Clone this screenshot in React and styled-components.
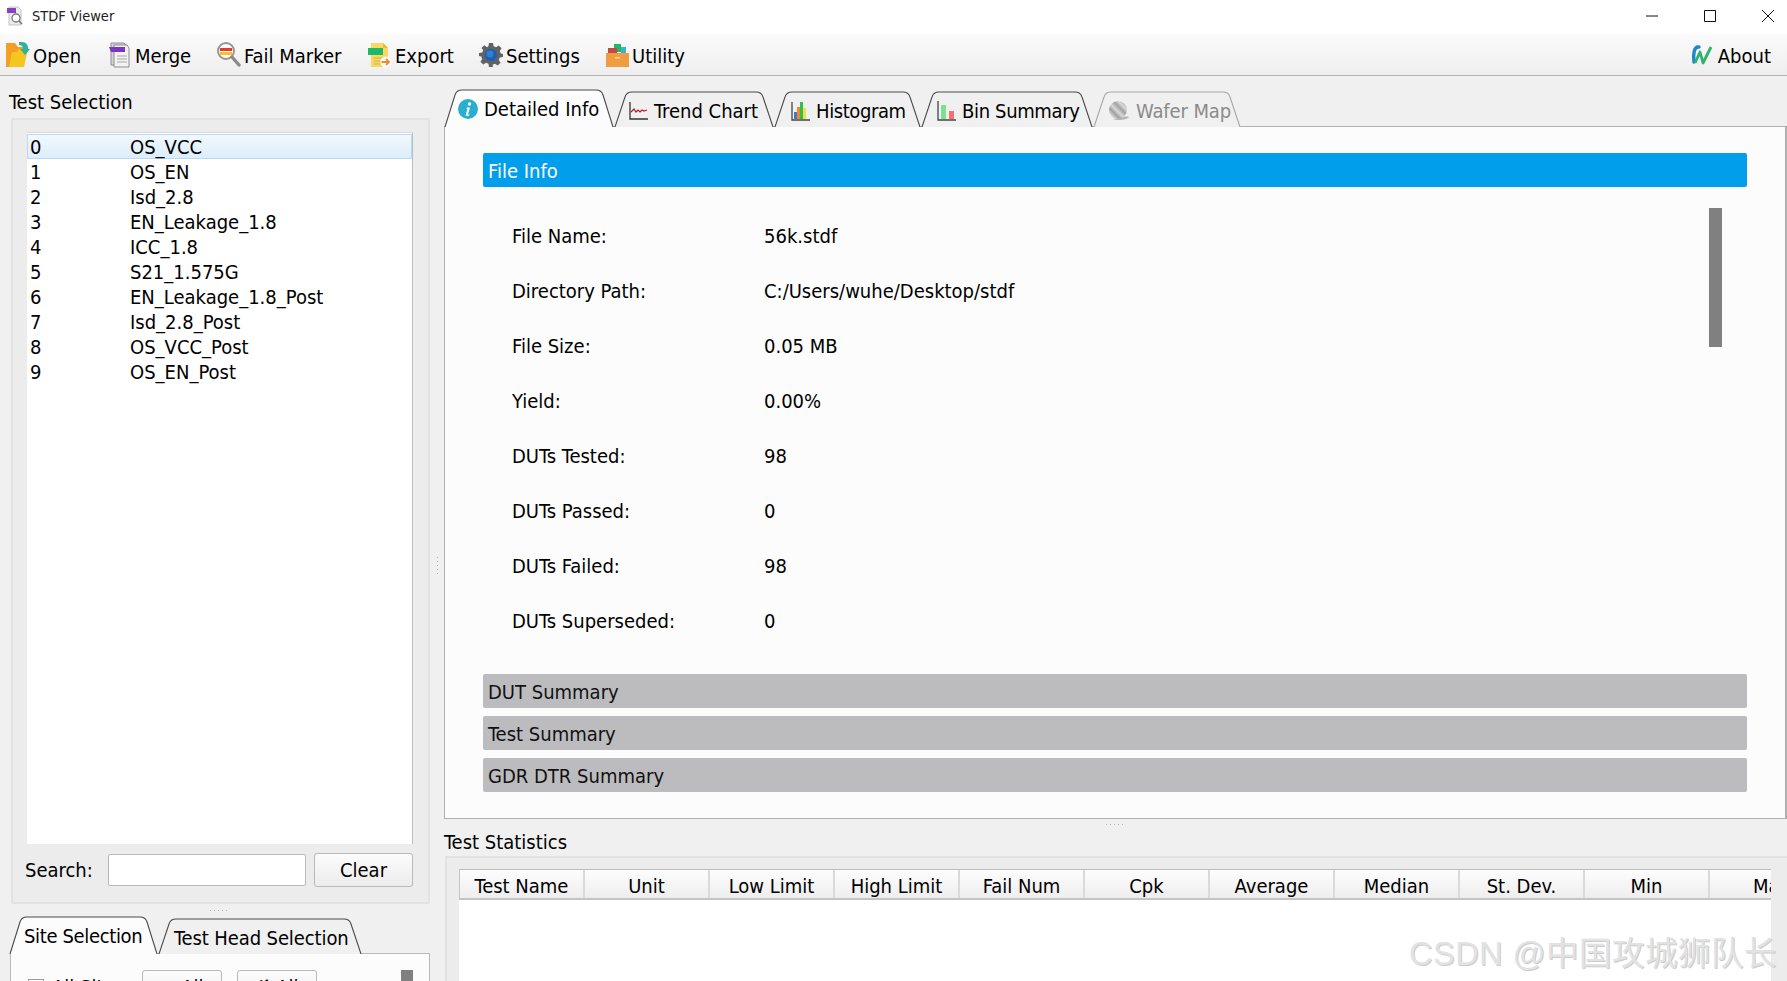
import React from 'react';
import styled, { createGlobalStyle } from 'styled-components';

const GlobalStyle = createGlobalStyle`
  html, body { margin: 0; padding: 0; background: #f0f0f0; overflow: hidden; }
  * { box-sizing: border-box; }
`;

const FONT = `"DejaVu Sans", "Noto Sans", sans-serif`;

const Window = styled.div`
  position: relative;
  width: 1787px;
  height: 981px;
  overflow: hidden;
  display: flex;
  flex-direction: column;
  background: #f0f0f0;
  color: #000;
  font-family: ${FONT};
  font-stretch: condensed;
  font-size: 20px;
`;

const TitleBar = styled.div`
  height: 34px;
  flex: none;
  background: #fff;
  display: flex;
  align-items: center;
  padding-left: 6px;
  padding-bottom: 3px;
  font-size: 14.5px;
  color: #222;
  gap: 8px;
`;

const WindowControls = styled.div`
  margin-left: auto;
  display: flex;
  padding-right: 13px;
  gap: 46px;
  svg { display: block; }
`;

const Toolbar = styled.div`
  height: 42px;
  flex: none;
  background: linear-gradient(#fbfbfb, #eeeeee);
  border-bottom: 1px solid #b4b4b4;
  display: flex;
  align-items: center;
  padding-left: 6px;
  padding-right: 16px;
`;

const ToolButton = styled.div`
  width: ${p => p.$w}px;
  display: flex;
  align-items: center;
  gap: 3px;
  white-space: nowrap;
  margin-left: ${p => (p.$end ? 'auto' : '0')};
  svg { flex: none; }
  span { padding-top: 2px; }
`;

const Main = styled.div`
  flex: 1;
  display: flex;
  min-height: 0;
`;

const LeftColumn = styled.div`
  width: 430px;
  flex: none;
  padding-left: 9px;
  display: flex;
  flex-direction: column;
`;

const SectionLabel = styled.div`
  height: ${p => p.$h}px;
  flex: none;
  display: flex;
  align-items: center;
  padding-top: ${p => p.$pt || 0}px;
  padding-bottom: ${p => p.$pb || 0}px;
`;

const SelectionGroup = styled.div`
  margin-left: 2px;
  height: 786px;
  flex: none;
  background: #ececec;
  border: 2px solid #e2e2e2;
  border-radius: 2px;
  padding: 12px 15px 0 14px;
  display: flex;
  flex-direction: column;
`;

const TestList = styled.div`
  height: 712px;
  flex: none;
  background: #fff;
  border-right: 1px solid #bdbdbd;
  border-top: 1px solid #d8d8d8;
  padding-top: 1px;
`;

const TestRow = styled.div`
  height: 25px;
  display: flex;
  align-items: center;
  padding-left: 2px;
  border: 1px solid ${p => (p.$selected ? '#b9daf5' : 'transparent')};
  background: ${p => (p.$selected ? 'linear-gradient(#f2f8fd, #dcedfb)' : 'transparent')};
`;

const RowIndex = styled.span`
  width: 100px;
`;

const SearchRow = styled.div`
  display: flex;
  align-items: center;
  margin-top: 9px;
  height: 34px;
`;

const SearchLabel = styled.span`
  width: 83px;
  margin-left: -2px;
`;

const SearchInput = styled.div`
  width: 199px;
  height: 32px;
  background: #fff;
  border: 1px solid #b9b9b9;
  border-radius: 2px;
`;

const PushButton = styled.div`
  width: ${p => p.$w}px;
  height: 34px;
  flex: none;
  margin-left: ${p => p.$ml || 0}px;
  border: 1px solid #b9b9b9;
  border-radius: 3px;
  background: linear-gradient(#fcfcfc, #ececec);
  display: flex;
  align-items: center;
  justify-content: center;
`;

const SplitDots = styled.div`
  height: ${p => p.$h}px;
  flex: none;
  display: flex;
  align-items: center;
  justify-content: center;
  &::before {
    content: '';
    width: 20px;
    height: 1px;
    background: repeating-linear-gradient(90deg, #b4b4b4 0 1px, transparent 1px 4px);
  }
`;

const TabBar = styled.div`
  height: ${p => p.$h}px;
  flex: none;
  display: flex;
  align-items: flex-end;
  position: relative;
  z-index: 1;
  margin-bottom: -1px;
`;

const TabRoot = styled.div`
  position: relative;
  width: ${p => p.$w}px;
  height: ${p => p.$h}px;
  flex: none;
  display: flex;
  align-items: center;
  gap: 6px;
  padding-left: ${p => p.$pad}px;
  padding-top: ${p => (p.$active ? 1 : 3)}px;
  white-space: nowrap;
  letter-spacing: ${p => p.$tight || 0}px;
  color: ${p => (p.$disabled ? '#8a8a8a' : '#000')};
  > * { position: relative; }
`;

const TabOutline = styled.svg`
  position: absolute !important;
  left: 0;
  top: 0;
`;

const SitePane = styled.div`
  flex: 1;
  margin-left: 1px;
  background: #fcfcfc;
  border: 1px solid #b9b9b9;
  padding: 16px 16px 0 17px;
  display: flex;
  align-items: flex-start;
`;

const CheckLabel = styled.label`
  display: flex;
  align-items: center;
  gap: 8px;
  width: 114px;
  height: 34px;
  white-space: nowrap;
`;

const CheckBox = styled.span`
  width: 16px;
  height: 16px;
  flex: none;
  background: #fff;
  border: 1px solid #9a9a9a;
`;

const ScrollThumb = styled.div`
  width: ${p => p.$w}px;
  height: ${p => p.$h}px;
  flex: none;
  margin-left: auto;
  background: #808080;
`;

const VSplit = styled.div`
  width: 14px;
  flex: none;
  display: flex;
  align-items: center;
  justify-content: center;
  &::before {
    content: '';
    width: 1px;
    height: 20px;
    margin-top: 76px;
    background: repeating-linear-gradient(#b4b4b4 0 1px, transparent 1px 4px);
  }
`;

const RightColumn = styled.div`
  flex: 1;
  min-width: 0;
  padding-top: 13px;
  display: flex;
  flex-direction: column;
`;

const InfoPane = styled.div`
  height: 693px;
  flex: none;
  background: #fcfcfc;
  border: 1px solid #b0b0b0;
  border-right-width: 2px;
  padding: 26px 38px 0 38px;
`;

const SectionBar = styled.div`
  height: 34px;
  margin-bottom: ${p => p.$mb || 0}px;
  border-radius: 2px;
  background: ${p => (p.$active ? '#009eeb' : '#bcbcbf')};
  color: ${p => (p.$active ? '#fff' : '#111')};
  display: flex;
  align-items: center;
  padding: 2px 0 0 5px;
`;

const InfoScroll = styled.div`
  margin-top: 21px;
  height: 466px;
  display: flex;
  align-items: flex-start;
  padding-right: 25px;
`;

const InfoList = styled.div`
  flex: 1;
`;

const InfoRow = styled.div`
  height: 55px;
  display: flex;
  align-items: center;
  padding-left: 29px;
`;

const InfoKey = styled.span`
  width: 252px;
`;

const StatsGroup = styled.div`
  flex: none;
  margin-left: 1px;
  height: 140px;
  background: #ececec;
  border: 2px solid #e2e2e2;
  border-right: 0;
  padding: 11px 16px 0 12px;
`;

const StatsTable = styled.div`
  height: 200px;
  background: #fff;
  overflow: hidden;
`;

const HeaderRow = styled.div`
  display: flex;
  height: 31px;
  border-top: 1px solid #bdbdbd;
  border-bottom: 2px solid #c4c4c4;
  background: linear-gradient(#fdfdfd, #eeeeee);
  border-left: 1px solid #c4c4c4;
`;

const HeaderCell = styled.div`
  width: 125px;
  flex: none;
  border-right: 2px solid #dadada;
  display: flex;
  align-items: center;
  justify-content: center;
  padding-top: 3px;
  white-space: nowrap;
`;

const Watermark = styled.div`
  position: absolute;
  left: 1409px;
  top: 927px;
  font-family: "Liberation Sans", "Noto Sans CJK SC", sans-serif;
  font-size: 32.5px;
  font-stretch: normal;
  white-space: nowrap;
  color: #e2e2e2;
  text-shadow: 1px 1px 0 #cccccc;
  letter-spacing: 0.5px;
`;

/* ---- icons ---- */

const IconOpen = () => (
  <svg width="24" height="26" viewBox="0 0 24 26">
    <path d="M0 1h9l3 4h5v20H0z" fill="#f29f24" />
    <path d="M3 25l3-15h5l2-3h9l-4 18z" fill="#f5c61f" />
    <path d="M13 0h3c4 0 6 3 6 6v1h2l-5 6-5-6h3V6c0-2-2-3-4-3z" fill="#2cb39c" />
  </svg>
);

const IconMerge = () => (
  <svg width="24" height="26" viewBox="0 0 24 26">
    <path d="M3 1h13l2 2v20H3z" fill="#d4d4d4" stroke="#8d8d8d" />
    <path d="M6 3h13l2 3v19H6z" fill="#f2f2f2" stroke="#8d8d8d" />
    <path d="M1 5h16v5H3z" fill="#7d35c4" />
    <path d="M9 14h10M9 17h10M9 20h10" stroke="#a9a9a9" />
  </svg>
);

const IconFail = () => (
  <svg width="25" height="26" viewBox="0 0 25 26">
    <circle cx="10" cy="9" r="8" fill="#fafafa" stroke="#9a9590" strokeWidth="2" />
    <path d="M4 6h12v3H4z" fill="#e43b2c" />
    <path d="M4 10h12v3H4z" fill="#f4c32c" />
    <path d="M16 15l7 8" stroke="#8a8a8a" strokeWidth="3.4" strokeLinecap="round" />
  </svg>
);

const IconExport = () => (
  <svg width="24" height="26" viewBox="0 0 24 26">
    <path d="M3 1h12l5 5v19H3z" fill="#f8d864" />
    <path d="M15 1l5 5h-5z" fill="#eebb2c" />
    <path d="M0 6h15v7H0z" fill="#1fb866" />
    <path d="M6 16h8M6 19h6M6 22h6" stroke="#d6ae3e" />
    <circle cx="18" cy="20" r="5.5" fill="#fff" />
    <path d="M13.5 20h7M18 17l3 3-3 3" stroke="#ef8a34" strokeWidth="1.8" fill="none" />
  </svg>
);

const IconGear = () => (
  <svg width="24" height="26" viewBox="0 0 24 24">
    <path
      d="M10 0h4l.6 3.2 2.4 1 2.700-1.800 2.900 2.900-1.800 2.700 1 2.400L24 11v3l-3.200.6-1 2.400 1.800 2.700-2.900 2.900-2.700-1.800-2.400 1L14 24h-4l-.6-3.200-2.400-1-2.700 1.800-2.900-2.900L3.200 16l-1-2.400L0 13v-3l3.200-.6 1-2.400L2.400 5.100l2.900-2.900L8 4.200l1.400-1z"
      fill="#5f6368"
    />
    <circle cx="12" cy="12" r="6" fill="#1d5fae" />
    <circle cx="11" cy="11" r="3.500" fill="#2f7fd6" />
  </svg>
);

const IconUtility = () => (
  <svg width="23" height="24" viewBox="0 0 23 24">
    <path d="M8 1h7v8H8z" fill="#25b565" />
    <path d="M15 4h5v6h-5z" fill="#36b6c9" />
    <path d="M2 5h9v6H2z" fill="#bd4b48" />
    <path d="M0 10h23v14H0z" fill="#f09c41" />
    <path d="M9 14h5v1.500H9z" fill="#f6d7af" />
  </svg>
);

const IconAbout = () => (
  <svg width="25" height="22" viewBox="0 0 25 22">
    <path d="M9 3C4 2 3 10 4 18" stroke="#1e86d0" strokeWidth="3.400" fill="none" strokeLinecap="round" />
    <path d="M5 19L10 8l3 11 8-16" stroke="#2fb26a" strokeWidth="2.800" fill="none" strokeLinejoin="round" />
  </svg>
);

const IconInfo = () => (
  <svg width="20" height="20" viewBox="0 0 20 20">
    <circle cx="10" cy="10" r="10" fill="#29aed1" />
    <circle cx="11.500" cy="5" r="1.700" fill="#fff" />
    <path d="M9 8.500h3l-2 7h1.500l-.5 1.200H7.500l2-7H8.300z" fill="#fff" />
  </svg>
);

const IconTrend = () => (
  <svg width="19" height="18" viewBox="0 0 19 18">
    <path d="M1 0v17h18" stroke="#333" strokeWidth="1.300" fill="none" />
    <path d="M2 10l3-3 2 3 2-2 2 2 2-2 2 1 3-1" stroke="#a8202a" strokeWidth="1.200" fill="none" />
  </svg>
);

const IconHist = () => (
  <svg width="19" height="20" viewBox="0 0 19 20">
    <path d="M1 1v18h18" stroke="#444" strokeWidth="1.300" fill="none" />
    <path d="M3 11h3v7H3z" fill="#3f78d6" />
    <path d="M6 6h3v12H6z" fill="#f0862f" />
    <path d="M9 1h3v17H9z" fill="#30c04c" />
    <path d="M12 7h3v11h-3z" fill="#f0e04a" />
  </svg>
);

const IconBin = () => (
  <svg width="19" height="20" viewBox="0 0 19 20">
    <path d="M1 0v19h18" stroke="#444" strokeWidth="1.300" fill="none" />
    <path d="M4 4h5v14H4z" fill="#7ee08e" />
    <path d="M12 10h5v8h-5z" fill="#f6706e" />
  </svg>
);

const IconWafer = () => (
  <svg width="22" height="22" viewBox="0 0 22 22">
    <defs>
      <linearGradient id="waferFill" x1="0" y1="1" x2="0.3" y2="0.7" spreadMethod="repeat">
        <stop offset="0" stopColor="#9c9c9c" />
        <stop offset="0.5" stopColor="#d8d8d8" />
        <stop offset="1" stopColor="#a8a8a8" />
      </linearGradient>
    </defs>
    <circle cx="10" cy="10" r="9" fill="url(#waferFill)" />
    <path d="M5 19c5 2 14 1 16-2-3-1-6 0-8 1z" fill="#b4b4b4" />
  </svg>
);

const AppIcon = () => (
  <svg width="18" height="20" viewBox="0 0 18 20">
    <path d="M3 1h9l3 3v15H3z" fill="#ececec" stroke="#c4c4c4" />
    <path d="M1 2h9v5H1z" fill="#8a3fc9" />
    <circle cx="10" cy="12" r="4" fill="#fff" stroke="#777" strokeWidth="1.300" />
    <path d="M13 15l3 3" stroke="#777" strokeWidth="1.600" />
  </svg>
);

const Tab = ({ w, h, pad, active, disabled, tight, icon, label }) => {
  const stroke = disabled ? '#a8a8a8' : '#4a4a4a';
  const fill = active ? '#fcfcfc' : '#f0f0f0';
  const top = 1;
  const outline = `M1 ${h}L11 ${top + 5}Q12.500 ${top} 18 ${top}H${w - 18}Q${w - 12.500} ${top} ${w - 11} ${top + 5}L${w - 1} ${h}`;
  return (
    <TabRoot $w={w} $h={h} $pad={pad} $active={active} $disabled={disabled} $tight={tight}>
      <TabOutline width={w} height={h} viewBox={`0 0 ${w} ${h}`}>
        <path d={outline} fill={fill} stroke={stroke} strokeWidth="1.100" />
      </TabOutline>
      {icon}
      <span>{label}</span>
    </TabRoot>
  );
};

const tests = ['OS_VCC', 'OS_EN', 'Isd_2.8', 'EN_Leakage_1.8', 'ICC_1.8', 'S21_1.575G', 'EN_Leakage_1.8_Post', 'Isd_2.8_Post', 'OS_VCC_Post', 'OS_EN_Post'];

const fileInfo = [
  ['File Name:', '56k.stdf'],
  ['Directory Path:', 'C:/Users/wuhe/Desktop/stdf'],
  ['File Size:', '0.05 MB'],
  ['Yield:', '0.00%'],
  ['DUTs Tested:', '98'],
  ['DUTs Passed:', '0'],
  ['DUTs Failed:', '98'],
  ['DUTs Superseded:', '0'],
];

const columns = ['Test Name', 'Unit', 'Low Limit', 'High Limit', 'Fail Num', 'Cpk', 'Average', 'Median', 'St. Dev.', 'Min', 'Max'];

const tools = [
  { name: 'Open', w: 102, Icon: IconOpen },
  { name: 'Merge', w: 108, Icon: IconMerge },
  { name: 'Fail Marker', w: 152, Icon: IconFail },
  { name: 'Export', w: 111, Icon: IconExport },
  { name: 'Settings', w: 127, Icon: IconGear },
  { name: 'Utility', w: 90, Icon: IconUtility },
];

export default function App() {
  return (
    <Window>
      <GlobalStyle />
      <TitleBar>
        <AppIcon />
        STDF Viewer
        <WindowControls>
          <svg width="12" height="12" viewBox="0 0 12 12"><path d="M0 6h12" stroke="#111" /></svg>
          <svg width="12" height="12" viewBox="0 0 12 12"><path d="M.5.5h11v11H.5z" stroke="#111" fill="none" /></svg>
          <svg width="12" height="12" viewBox="0 0 12 12"><path d="M0 0l12 12M12 0L0 12" stroke="#111" /></svg>
        </WindowControls>
      </TitleBar>

      <Toolbar>
        {tools.map(({ name, w, Icon }) => (
          <ToolButton key={name} $w={w}>
            <Icon />
            <span>{name}</span>
          </ToolButton>
        ))}
        <ToolButton $end>
          <IconAbout />
          <span>About</span>
        </ToolButton>
      </Toolbar>

      <Main>
        <LeftColumn>
          <SectionLabel $h={42} $pt={10}>Test Selection</SectionLabel>
          <SelectionGroup>
            <TestList>
              {tests.map((name, i) => (
                <TestRow key={name} $selected={i === 0}>
                  <RowIndex>{i}</RowIndex>
                  {name}
                </TestRow>
              ))}
            </TestList>
            <SearchRow>
              <SearchLabel>Search:</SearchLabel>
              <SearchInput />
              <PushButton $w={99} $ml={8}>Clear</PushButton>
            </SearchRow>
          </SelectionGroup>
          <SplitDots $h={12} />
          <TabBar $h={38}>
            <Tab w={149} h={38} pad={15} active tight={-0.35} label="Site Selection" />
            <Tab w={204} h={36} pad={16} tight={-0.1} label="Test Head Selection" />
          </TabBar>
          <SitePane>
            <CheckLabel><CheckBox />All Sites</CheckLabel>
            <PushButton $w={80}>✓ All</PushButton>
            <PushButton $w={80} $ml={15}>✗ All</PushButton>
            <ScrollThumb $w={12} $h={120} />
          </SitePane>
        </LeftColumn>

        <VSplit />

        <RightColumn>
          <TabBar $h={38}>
            <Tab w={170} h={38} pad={14} active icon={<IconInfo />} label="Detailed Info" />
            <Tab w={160} h={36} pad={15} icon={<IconTrend />} label="Trend Chart" />
            <Tab w={147} h={36} pad={17} tight={-0.4} icon={<IconHist />} label="Histogram" />
            <Tab w={172} h={36} pad={16} tight={-0.35} icon={<IconBin />} label="Bin Summary" />
            <Tab w={148} h={36} pad={15} disabled tight={-0.1} icon={<IconWafer />} label="Wafer Map" />
          </TabBar>
          <InfoPane>
            <SectionBar $active>File Info</SectionBar>
            <InfoScroll>
              <InfoList>
                {fileInfo.map(([key, value]) => (
                  <InfoRow key={key}>
                    <InfoKey>{key}</InfoKey>
                    {value}
                  </InfoRow>
                ))}
              </InfoList>
              <ScrollThumb $w={13} $h={139} />
            </InfoScroll>
            <SectionBar $mb={8}>DUT Summary</SectionBar>
            <SectionBar $mb={8}>Test Summary</SectionBar>
            <SectionBar>GDR DTR Summary</SectionBar>
          </InfoPane>
          <SplitDots $h={10} />
          <SectionLabel $h={27} $pb={2}>Test Statistics</SectionLabel>
          <StatsGroup>
            <StatsTable>
              <HeaderRow>
                {columns.map(c => <HeaderCell key={c}>{c}</HeaderCell>)}
              </HeaderRow>
            </StatsTable>
          </StatsGroup>
        </RightColumn>
      </Main>

      <Watermark>CSDN @中国攻城狮队长</Watermark>
    </Window>
  );
}
